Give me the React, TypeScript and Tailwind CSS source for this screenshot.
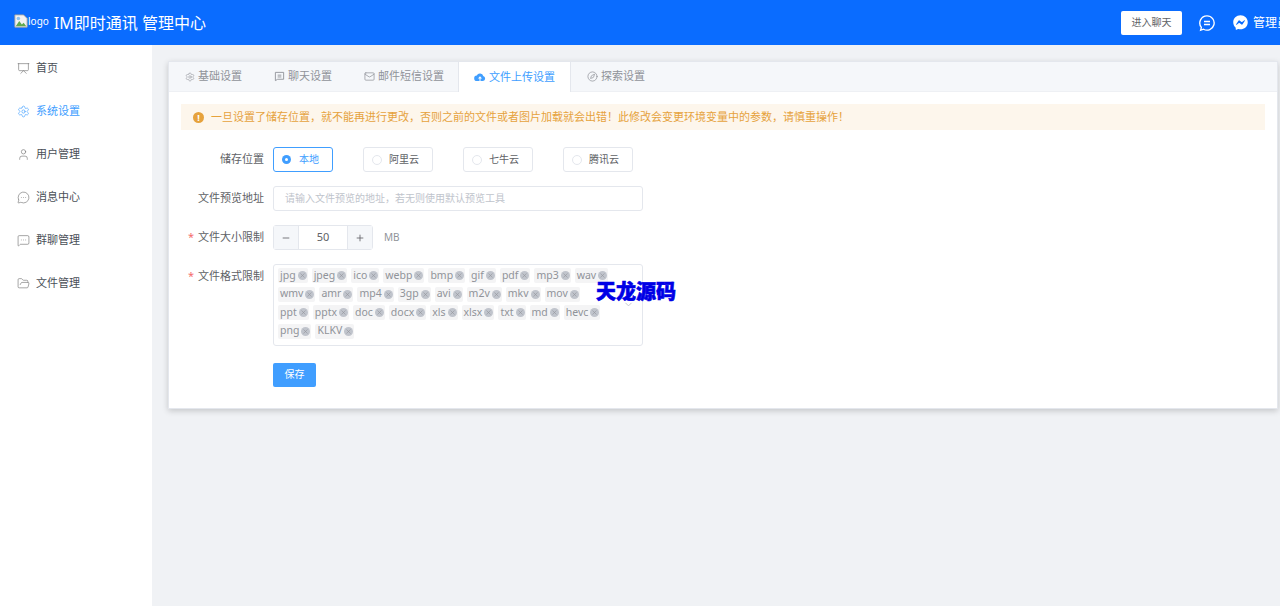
import React from 'react';
import {
  Presentation,
  Settings,
  User,
  MessageCircleMore,
  MessageSquareMore,
  FolderOpen,
  Mail,
  Compass,
  ChevronDown,
  Minus,
  Plus,
  X,
} from 'lucide-react';
import { FaFacebookMessenger } from 'react-icons/fa';

const font = "font-['Noto_Sans','Noto_Sans_CJK_SC',sans-serif]";

const menu = [
  { label: '首页', icon: Presentation },
  { label: '系统设置', icon: Settings, active: true },
  { label: '用户管理', icon: User },
  { label: '消息中心', icon: MessageCircleMore },
  { label: '群聊管理', icon: MessageSquareMore },
  { label: '文件管理', icon: FolderOpen },
];

const formats = [
  'jpg', 'jpeg', 'ico', 'webp', 'bmp', 'gif', 'pdf', 'mp3', 'wav',
  'wmv', 'amr', 'mp4', '3gp', 'avi', 'm2v', 'mkv', 'mov', 'ppt',
  'pptx', 'doc', 'docx', 'xls', 'xlsx', 'txt', 'md', 'hevc', 'png',
  'KLKV',
];

const CloudUpload = () => (
  <svg width="12" height="12" viewBox="0 0 24 24" className="text-[#409eff]">
    <path
      fill="currentColor"
      d="M18.5 10.2A6.8 6.8 0 0 0 5.6 8.9 5.4 5.4 0 0 0 6.2 20H11v-5H8l4-4.5 4 4.5h-3v5h5a5 5 0 0 0 .5-9.8z"
    />
  </svg>
);

const ChatTab = () => (
  <svg width="11" height="11" viewBox="0 0 24 24" fill="none" stroke="currentColor" strokeWidth="2">
    <path d="M3 3h18v15H8l-5 3z" />
    <path d="M8 9h8M8 13h8" />
  </svg>
);

const Field = ({ label, required, children }: { label: string; required?: boolean; children: React.ReactNode }) => (
  <div className="flex items-start">
    <label className="flex h-[25px] w-[83px] items-center justify-end text-[11px] text-[#606266]">
      {required && <span className="mr-1 text-[#f56c6c]">*</span>}
      {label}
    </label>
    <div className="ml-[9px]">{children}</div>
  </div>
);

const Radio = ({ label, checked }: { label: string; checked?: boolean }) => (
  <div
    className={`flex h-[25px] items-center rounded-[3px] border pl-[8px] pr-[13px] text-[10px] ${
      checked ? 'border-[#409eff] text-[#409eff]' : 'border-[#e4e7ed] text-[#606266]'
    }`}
  >
    {checked ? (
      <span className="flex h-[9px] w-[9px] items-center justify-center rounded-full bg-[#409eff]">
        <span className="h-[3px] w-[3px] rounded-full bg-white" />
      </span>
    ) : (
      <span className="h-[10px] w-[10px] rounded-full border border-[#e4e7ed]" />
    )}
    <span className={checked ? 'ml-[8px]' : 'ml-[7px]'}>{label}</span>
  </div>
);

const Tag = ({ text }: { text: string }) => (
  <span className="flex h-[15px] items-center gap-[2px] rounded-[2px] bg-[#f4f4f5] pl-[2px] pr-[1px] text-[10.5px] text-[#909399]">
    {text}
    <span className="flex h-[9px] w-[9px] items-center justify-center rounded-full bg-[#c0c4cc]">
      <X size={7} strokeWidth={2} className="text-[#909399]" />
    </span>
  </span>
);

export default function App() {
  return (
    <div className={`flex h-screen w-full flex-col overflow-hidden bg-[#f0f2f5] ${font}`}>
      <header className="flex h-[45px] shrink-0 items-center bg-[#0a6cff] text-white">
        <div className="ml-[14px] flex items-center">
          <svg width="14" height="14" viewBox="0 0 16 16" className="mb-[3px]">
            <path d="M1 1h10l4 4v10H1z" fill="#f2f2f2" stroke="#a0a0a0" />
            <path d="M2 14l4-6 3 4 2-2 3 4z" fill="#5fa94e" />
            <circle cx="5" cy="5" r="2" fill="#8fc1f0" />
          </svg>
          <span className="mb-[3px] text-[10px] leading-none">logo</span>
          <h1 className="ml-[5px] whitespace-nowrap text-[16px] font-normal">IM即时通讯 管理中心</h1>
        </div>
        <div className="ml-auto flex w-[159px] items-center overflow-hidden whitespace-nowrap">
          <button className="h-[24px] w-[61px] shrink-0 rounded-[2px] bg-white text-[10px] text-[#606266]">
            进入聊天
          </button>
          <svg width="18" height="18" viewBox="0 0 24 24" fill="none" stroke="white" strokeWidth="1.8" className="ml-[16px] shrink-0">
            <path d="M12 2.5a9.5 9.5 0 1 1-4.6 17.8L3.5 21.5l1-3.6A9.5 9.5 0 0 1 12 2.5z" />
            <path d="M8 10h8M8 14h8" />
          </svg>
          <FaFacebookMessenger size={15} className="ml-[17px] shrink-0" />
          <span className="ml-[5px] text-[12px]">管理员</span>
        </div>
      </header>

      <div className="flex min-h-0 flex-1">
        <aside className="w-[152px] shrink-0 bg-white pt-[2px]">
          {menu.map(({ label, icon: Icon, active }) => (
            <div
              key={label}
              className={`flex h-[43px] items-center pl-[17px] text-[11px] ${active ? 'text-[#409eff]' : 'text-[#4a4f57]'}`}
            >
              <Icon size={13} strokeWidth={1.2} className={active ? 'text-[#409eff]' : 'text-[#777]'} />
              <span className="ml-[6px]">{label}</span>
            </div>
          ))}
        </aside>

        <main className="min-w-0 flex-1 pl-4 pr-[2px] pt-4">
          <section className="relative h-[348px] border border-[#e4e7ed] bg-white shadow-[0_2px_6px_rgba(0,0,0,0.18)]">
            <nav className="flex h-[30px] items-stretch border-b border-[#eef0f4] bg-[#f5f7fa] text-[11px] text-[#909399]">
              <div className="flex items-center gap-[3px] px-4">
                <Settings size={10} strokeWidth={1.4} />
                基础设置
              </div>
              <div className="flex items-center gap-[3px] px-4">
                <ChatTab />
                聊天设置
              </div>
              <div className="flex items-center gap-[3px] pl-4 pr-[14px]">
                <Mail size={11} strokeWidth={1.6} />
                邮件短信设置
              </div>
              <div className="-mb-px flex items-center gap-[3px] border-x border-[#e4e7ed] bg-white px-[15px] text-[#409eff]">
                <CloudUpload />
                文件上传设置
              </div>
              <div className="flex items-center gap-[3px] px-4">
                <Compass size={11} strokeWidth={1.6} />
                探索设置
              </div>
            </nav>

            <div className="px-3 pt-3">
              <div className="flex h-[26px] items-center bg-[#fdf6ec] pl-3 text-[11px] text-[#e6a23c]">
                <span className="flex h-[11px] w-[11px] items-center justify-center rounded-full bg-[#e6a23c] text-[9px] font-bold leading-none text-white">
                  !
                </span>
                <span className="ml-[7px]">
                  一旦设置了储存位置，就不能再进行更改，否则之前的文件或者图片加载就会出错！此修改会变更环境变量中的参数，请慎重操作！
                </span>
              </div>

              <form className="mt-[17px] flex flex-col gap-[14px]">
                <Field label="储存位置">
                  <div className="flex gap-[30px]">
                    <Radio label="本地" checked />
                    <Radio label="阿里云" />
                    <Radio label="七牛云" />
                    <Radio label="腾讯云" />
                  </div>
                </Field>
                <Field label="文件预览地址">
                  <div className="flex h-[25px] w-[370px] items-center rounded-[3px] border border-[#e4e7ed] pl-[11px] text-[10px] text-[#c0c4cc]">
                    请输入文件预览的地址，若无则使用默认预览工具
                  </div>
                </Field>
                <Field label="文件大小限制" required>
                  <div className="flex items-center">
                    <div className="flex h-[25px] w-[100px] items-stretch rounded-[3px] border border-[#e4e7ed] text-[11px] text-[#606266]">
                      <span className="flex w-[25px] items-center justify-center border-r border-[#e4e7ed] bg-[#f5f7fa]">
                        <Minus size={10} />
                      </span>
                      <span className="flex flex-1 items-center justify-center">50</span>
                      <span className="flex w-[25px] items-center justify-center border-l border-[#e4e7ed] bg-[#f5f7fa]">
                        <Plus size={10} />
                      </span>
                    </div>
                    <span className="ml-[11px] text-[10px] text-[#909399]">MB</span>
                  </div>
                </Field>
                <Field label="文件格式限制" required>
                  <div className="relative flex h-[82px] w-[370px] flex-wrap content-start gap-x-[4px] gap-y-[3.5px] rounded-[3px] border border-[#e4e7ed] pl-[4px] pr-[30px] pt-[3px]">
                    {formats.map((f) => (
                      <Tag key={f} text={f} />
                    ))}
                    <ChevronDown size={11} className="absolute right-[8px] top-[34px] text-[#c0c4cc]" />
                  </div>
                </Field>
                <div className="-mt-[0px] pl-[92px]">
                  <button type="button" className="h-[24px] w-[43px] rounded-[2px] bg-[#409eff] text-[10px] text-white">
                    保存
                  </button>
                </div>
              </form>
            </div>

            {/* watermark on the shot */}
            <span className="absolute left-[427px] top-[220px] text-[20px] font-black leading-none text-[#0000e6] [-webkit-text-stroke:0.6px_#0000e6]">
              天龙源码
            </span>
          </section>
        </main>
      </div>
    </div>
  );
}
